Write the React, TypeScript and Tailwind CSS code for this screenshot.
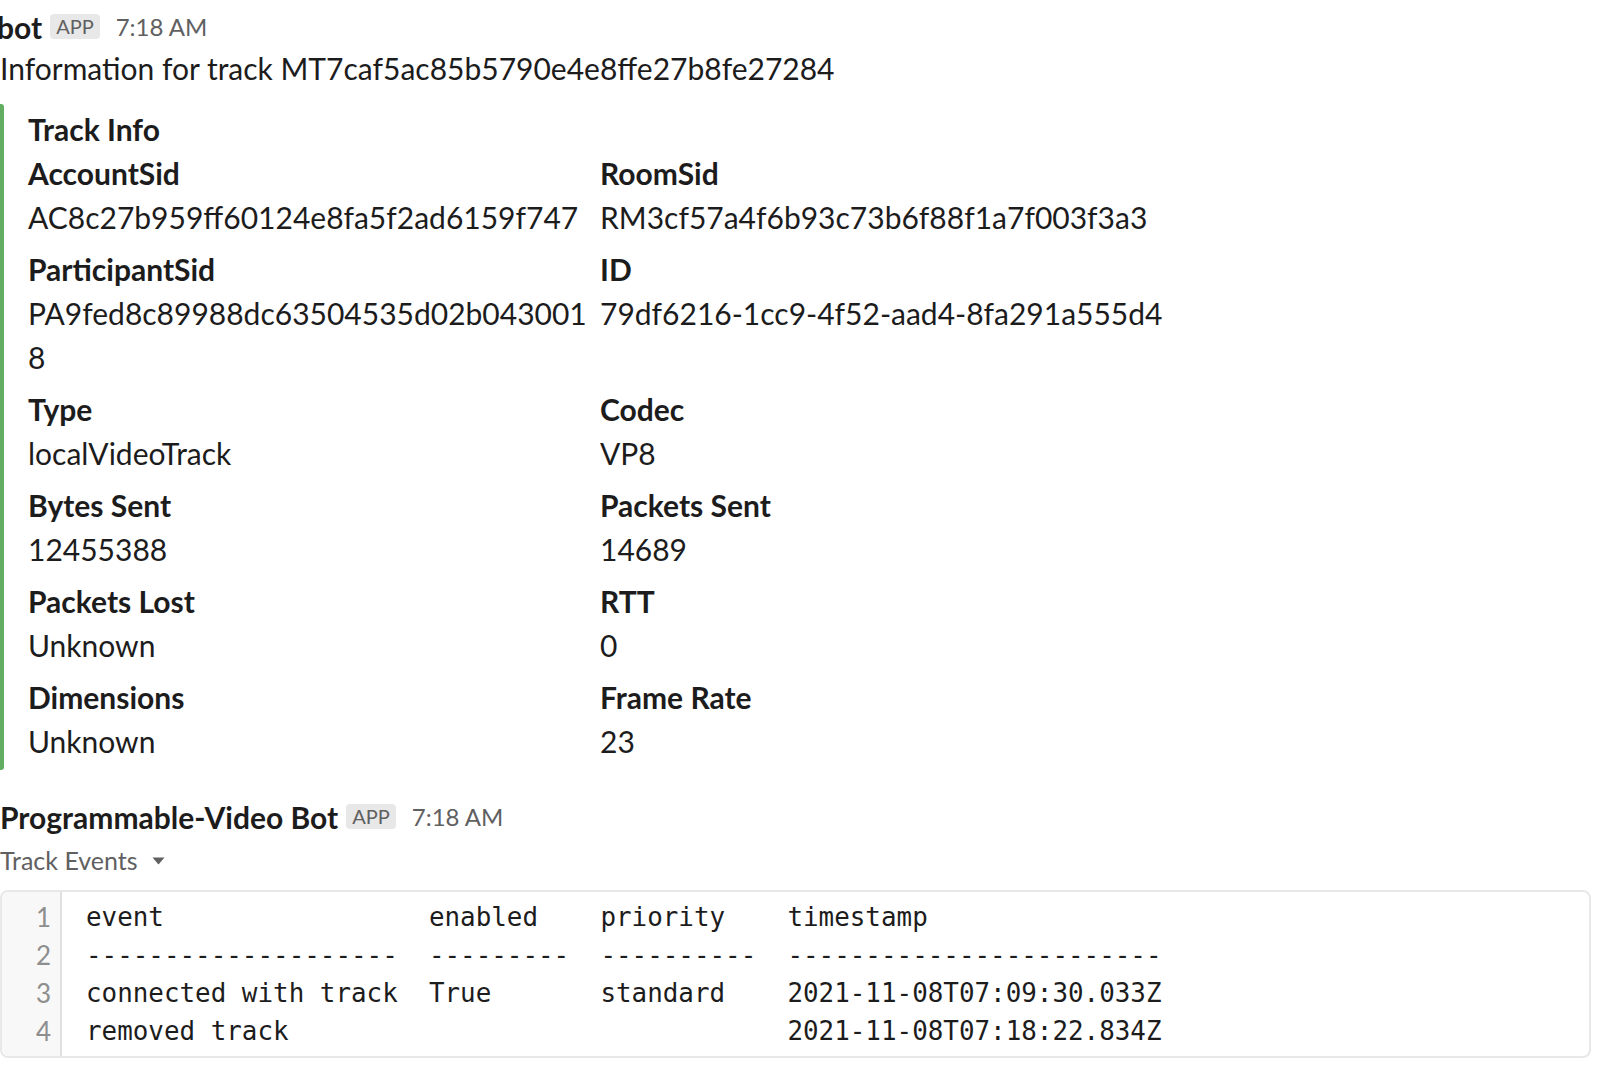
import React from 'react';

interface Field {
  label: string;
  value: string;
}

const fields: Field[] = [
  { label: 'AccountSid', value: 'AC8c27b959ff60124e8fa5f2ad6159f747' },
  { label: 'RoomSid', value: 'RM3cf57a4f6b93c73b6f88f1a7f003f3a3' },
  { label: 'ParticipantSid', value: 'PA9fed8c89988dc63504535d02b0430018' },
  { label: 'ID', value: '79df6216-1cc9-4f52-aad4-8fa291a555d4' },
  { label: 'Type', value: 'localVideoTrack' },
  { label: 'Codec', value: 'VP8' },
  { label: 'Bytes Sent', value: '12455388' },
  { label: 'Packets Sent', value: '14689' },
  { label: 'Packets Lost', value: 'Unknown' },
  { label: 'RTT', value: '0' },
  { label: 'Dimensions', value: 'Unknown' },
  { label: 'Frame Rate', value: '23' },
];

const codeLines = [
  'event                 enabled    priority    timestamp',
  '--------------------  ---------  ----------  ------------------------',
  'connected with track  True       standard    2021-11-08T07:09:30.033Z',
  'removed track                                2021-11-08T07:18:22.834Z',
];

function AppBadge() {
  return (
    <span className="inline-flex items-center h-[25px] px-[6px] rounded-[4px] bg-[#e8e8e8] text-[#616061] text-[20px] leading-[25px]">
      APP
    </span>
  );
}

function MessageHeader({ name, cut }: { name: string; cut?: boolean }) {
  return (
    <div className="flex items-center h-[44px]">
      <span className={cut ? 'font-bold text-[30px] leading-[44px] text-[#1d1c1d] -ml-[3px]' : 'font-bold text-[30px] leading-[44px] text-[#1d1c1d]'}>
        {name}
      </span>
      <span className="ml-[8px]">
        <AppBadge />
      </span>
      <span className="ml-[16px] text-[24px] text-[#616061]">7:18 AM</span>
    </div>
  );
}

export default function App() {
  return (
    <div
      className="min-h-screen bg-white text-[#1d1c1d] overflow-hidden"
      style={{ fontFamily: 'Lato, "Noto Sans", sans-serif' }}
    >
      {/* first message */}
      <div className="pt-[5px]">
        <div className="-mb-[3px]">
          <MessageHeader name="bot" cut />
        </div>
        <div className="text-[30px] leading-[44px]">Information for track MT7caf5ac85b5790e4e8ffe27b8fe27284</div>

        {/* attachment */}
        <div className="mt-[14px] flex">
          <div className="w-[4px] shrink-0 rounded-r-[3px] bg-[#63ad60]" />
          <div className="pl-[24px] pt-[3px] pb-[7px]">
            <div className="font-bold text-[30px] leading-[44px]">Track Info</div>
            <div className="grid grid-cols-[572px_700px] gap-y-[8px]">
              {fields.map((f) => (
                <div key={f.label} className="pr-[2px]">
                  <div className="font-bold text-[30px] leading-[44px]">{f.label}</div>
                  <div className="text-[30px] leading-[44px] break-all">{f.value}</div>
                </div>
              ))}
            </div>
          </div>
        </div>
      </div>

      {/* second message */}
      <div className="mt-[25px]">
        <MessageHeader name="Programmable-Video Bot" />
        <div className="flex items-center h-[44px] text-[25px] text-[#616061]">
          <span>Track Events</span>
          <svg className="ml-[14px]" width="13" height="8" viewBox="0 0 13 8">
            <path d="M0.5 0.5 L12.5 0.5 L6.5 7.5 Z" fill="#616061" />
          </svg>
        </div>

        <div className="mt-[7px] mr-[23px] flex rounded-[8px] border-2 border-[#e8e8e8] overflow-hidden">
          <div className="w-[60px] shrink-0 bg-[#f8f8f8] border-r-2 border-[#e0e0e0] py-[6px] pr-[9px] text-right text-[26px] leading-[38px] text-[#8e8e8e]">
            {codeLines.map((_, i) => (
              <div key={i}>{i + 1}</div>
            ))}
          </div>
          <pre
            className="flex-1 pl-[24px] py-[6px] text-[25.9px] leading-[38px] text-[#1d1c1d] whitespace-pre"
            style={{ fontFamily: '"DejaVu Sans Mono", "Liberation Mono", monospace' }}
          >
            {codeLines.join('\n')}
          </pre>
        </div>
      </div>
    </div>
  );
}
